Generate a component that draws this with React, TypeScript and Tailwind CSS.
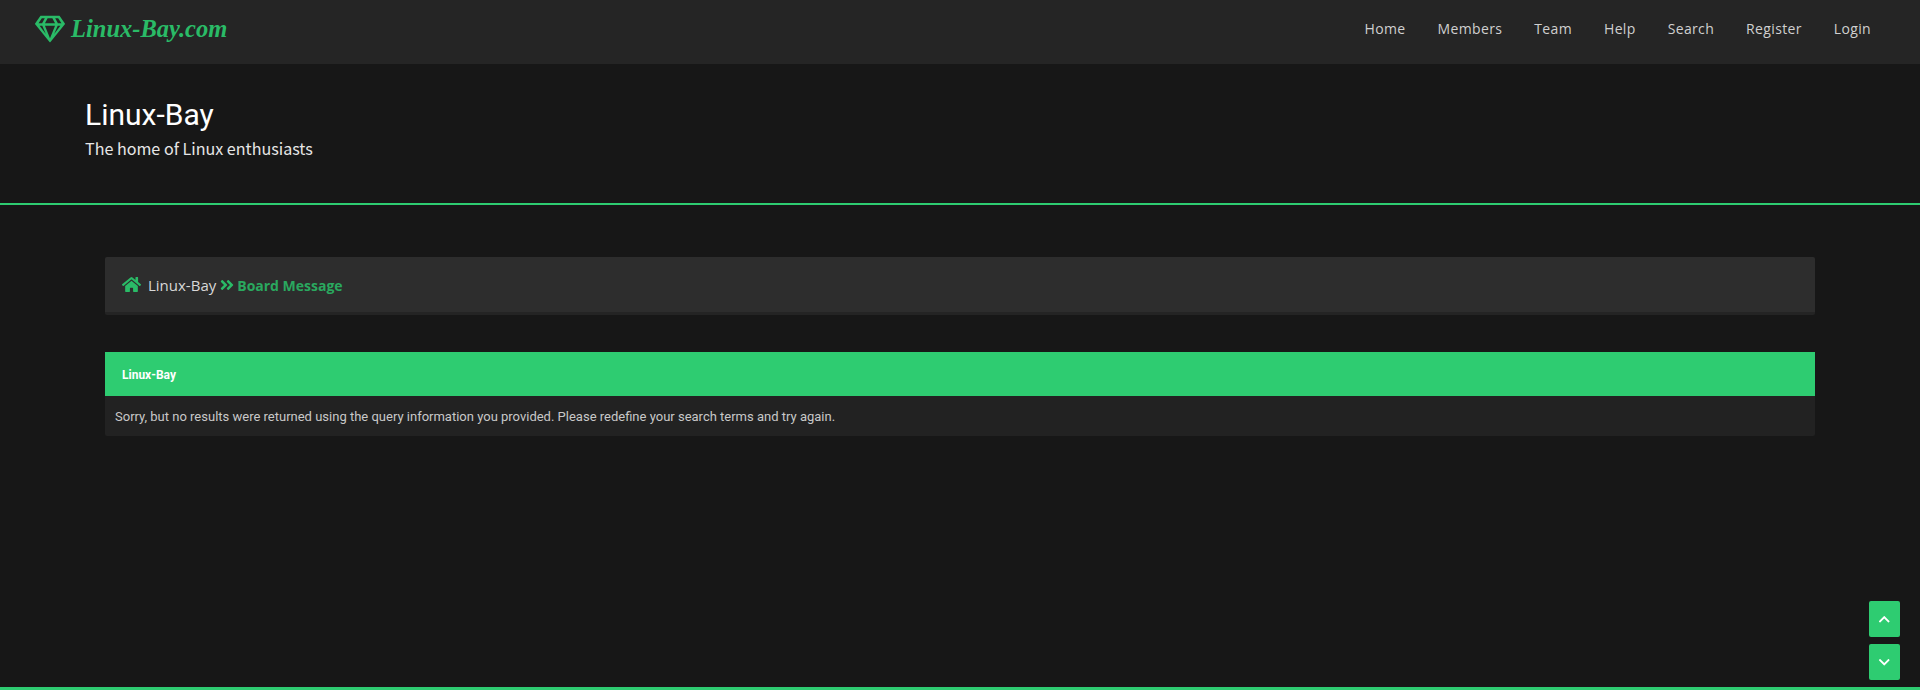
import { FaAngleDoubleRight, FaChevronDown, FaChevronUp, FaHome, FaRegGem } from 'react-icons/fa';

const navLinks = ['Home', 'Members', 'Team', 'Help', 'Search', 'Register', 'Login'];

export default function App() {
  return (
    <div className="relative flex min-h-screen flex-col bg-[#171717] font-['Open_Sans',sans-serif]">
      <nav className="flex h-16 items-center justify-between bg-[#252525] pb-[6px] pl-[35px] pr-[49px]">
        <a href="#" className="flex items-center gap-[6px] text-[#2abb67]">
          <FaRegGem className="text-[30px]" />
          <span className="font-['Liberation_Serif',serif] text-[24.5px] font-bold italic leading-none">Linux-Bay.com</span>
        </a>
        <ul className="flex items-center gap-8">
          {navLinks.map((link) => (
            <li key={link} className="text-sm tracking-[0.35px] text-[#d0d0d0]">
              {link}
            </li>
          ))}
        </ul>
      </nav>

      <header className="h-[141px] border-b-2 border-[#2ecc71] pl-[85px] pt-[27px]">
        <h1 className="font-['Roboto',sans-serif] text-[30px] leading-[48px] text-white">Linux-Bay</h1>
        <p className="font-['Noto_Sans_CJK_SC','Noto_Sans',sans-serif] text-[16.1px] leading-[19px] text-[#e6e6e6]">The home of Linux enthusiasts</p>
      </header>

      <main className="flex-1 px-[105px] pt-[52px]">
        <div className="flex h-[58px] items-center rounded-[2px] border-b-[3px] border-[#242424] bg-[#2d2d2d] pl-[17px] pt-[1px]">
          <FaHome className="mb-[2px] mr-[7px] text-[19px] text-[#2abb67]" />
          <span className="text-[15px] text-[#d8d8d8]">Linux-Bay</span>
          <FaAngleDoubleRight className="ml-[3px] mr-[2px] text-base text-[#2abb67]" />
          <span className="pt-[1px] text-sm font-bold text-[#2aa85f]">Board Message</span>
        </div>

        <section className="mt-[37px] font-['Roboto',sans-serif]">
          <div className="flex h-11 items-center bg-[#2ecc71] pl-[17px] pt-[1px] text-xs font-bold text-white">Linux-Bay</div>
          <div className="flex h-10 items-center rounded-b-[2px] bg-[#222222] pl-[10px] pt-[1px] text-[13px] text-[#c8c8c8]">
            Sorry, but no results were returned using the query information you provided. Please redefine your search terms and try again.
          </div>
        </section>
      </main>

      <div className="absolute bottom-[10px] right-5 flex flex-col gap-[7px]">
        <button className="flex h-9 w-[31px] items-center justify-center rounded-[2px] bg-[#2ecc71] text-[12.5px] text-white">
          <FaChevronUp />
        </button>
        <button className="flex h-9 w-[31px] items-center justify-center rounded-[2px] bg-[#2ecc71] text-[12.5px] text-white">
          <FaChevronDown />
        </button>
      </div>

      <footer className="h-[3px] bg-[#2ecc71]" />
    </div>
  );
}
